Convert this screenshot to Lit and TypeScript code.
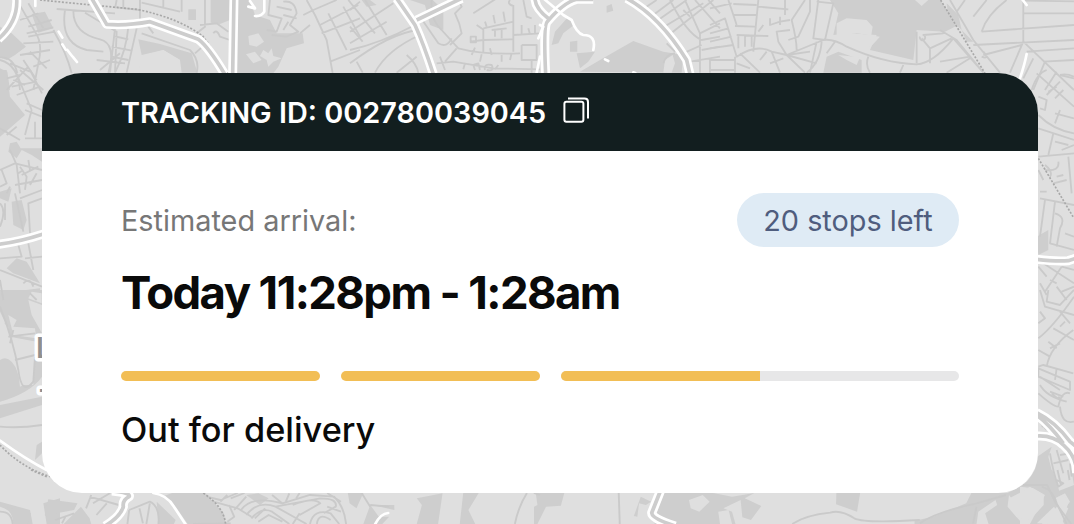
import { LitElement, html, css, svg } from 'lit';
import { customElement, property } from 'lit/decorators.js';

interface MapTile {
    transform: string;
    areas?: string;
    land?: string;
    streets?: string;
    roads?: string;
    paths?: string;
    rails?: string;
}

// Each tile keeps its own local grid, the transform puts it on the map
const TILES: MapTile[] = [
    {
        transform: 'scale(.3333)',
        areas: `M0 80L35 100 78 140 45 165 20 180 0 172Z M0 205L22 215 30 270H0Z M95 42L135 35 160 85 115 98Z
            M415 118L480 132 575 160 592 218H540V180L490 150 425 165Z M565 28H588V60H565Z M632 0H690V60L660 72 632 68Z
            M708 0H750L765 45 810 60 830 100 908 100 912 130 860 145 835 200 820 220H708Z M560 165L575 165 590 218H560Z`,
        land: `M745 108L775 100 792 125 770 140 748 135Z M738 163L765 155 785 180 760 190Z M790 150L805 160 815 145 820 168 845 175 820 185 805 200 800 180 780 168Z
            M425 168L490 150 540 180 545 218H417Z`,
        streets: `M0 172Q40 170 52 219 M0 180Q55 195 60 270 M60 60L115 40 M62 20L105 95Q130 130 115 190L100 270 M85 10L130 85
            M160 90Q200 160 215 220 M195 30Q180 130 260 150L310 155 M220 33Q220 100 300 118 350 130 325 219 M255 38L350 95 345 218
            M170 27L345 40 M345 85L330 218 M385 80Q380 150 345 218 M410 85L380 218 M425 100L570 150Q600 180 590 218 M445 80L460 100
            M340 108L385 118 M335 140L395 152 M335 170L385 180 M290 180L375 190 M300 210L360 160 M70 130L160 125 M60 165L150 150
            M30 190L90 215 M60 210L130 270 M90 155L140 205 M70 180L110 240 M20 270L85 200 M40 240L75 255 M100 200L150 180
            M85 80L155 60 M80 100L160 82 M85 110L165 95 M350 0L345 25 M370 0V25 M420 0V60 M350 22L420 30 M425 8L540 35 M490 0V22 M545 0V35
            M615 0V80L590 100 M600 75L650 70 685 95 M640 100Q650 85 660 110L690 120 M585 160L625 125
            M810 0L805 45 845 55 830 95 800 90 M850 5Q885 0 890 40L870 75 895 95 860 110 815 105 M830 20L875 30 M850 45L890 55 M865 65L850 90
            M910 45L940 30 1010 0 M945 45L980 120 998 219 M960 75L1075 15 M965 100L1080 55 M985 40L1040 150 M1030 20L1080 110 M990 185L1080 150
            M900 100L930 75 M920 0L945 45`,
        roads: 'M50 -5Q55 65 -5 117 M275 -5L320 73Q380 78 450 65L595 118Q625 140 674 222 M702 -5L698 225',
        paths: 'M106 0V18 M745 20L765 25 750 3 M793 0V35Q785 50 765 48 M176 95L187 113 M187 133L197 149 M202 150L216 168 M218 170L231 186',
        rails: 'M120 0L410 28Q540 55 610 110L685 222'
    },
    {
        transform: 'translate(350 0) scale(.3333)',
        areas: `M180 0H248L280 30V90L240 75 225 15Z M605 135L615 95 655 50 672 75 640 100 625 130Z M660 125L682 122V155H660Z M680 160L735 155 715 185 690 205Z
            M690 215L750 180 850 123 940 155 1000 165 995 218Z M770 18L785 12 790 32 770 38Z M35 0L60 0 80 15 50 20Z`,
        land: 'M940 218L945 180 968 165 975 190 965 218Z',
        streets: `M0 80L38 125 M0 150Q90 130 195 75 M0 190Q120 100 205 90 M75 218Q110 150 210 105 M140 218L200 170 M20 185L38 218 M0 95L130 10 M-5 0L75 100
            M45 0L110 105 M0 30L30 5 M0 130L110 65 M170 165Q200 190 205 219 M210 50Q245 100 265 130 290 145 305 115 M245 0Q240 60 275 90L325 145Q400 165 510 160
            M400 125V155 M400 85L490 65 M400 120L490 118 M400 85V155 M490 15V155 M490 105L570 100 M480 0Q470 12 490 18 M515 135H560V180H515V135 M370 40L440 -5
            M410 80L405 65 M435 70L430 45 M465 65L460 35 M380 75L402 90 M360 125L400 120 M362 110H378V127H362Z M425 90L470 85 M435 90V110 M455 87V115
            M365 165L375 143 M395 163L390 185 M425 165L420 145 M455 165V185 M485 160L480 180 M515 105V75 M540 103L535 85 M555 100V75
            M320 145L285 185 M260 190L310 185 430 205 570 208 M340 208L345 190 M375 210L370 195 385 190 390 210 M405 210Q400 190 425 195 435 215 410 210 M435 208L445 195
            M545 180V218 M270 170L285 210 M325 0L335 20 315 40Q330 70 335 100L300 135 M520 0L530 50 545 55 M875 30L920 0 M910 45L970 0 M925 60L1010 0
            M935 85L1060 10 M950 110L1090 0 M960 0Q1010 100 1055 120L1110 110 M1005 0L1050 100 1050 218 M1035 0L1110 85 M1075 0L1110 40 M1050 100L1110 70 M1055 150L1110 140
            M1020 185L1110 170 M950 130L975 155 M1000 160L1055 135 M1000 30L1020 50 M940 190Q950 160 975 160 M1080 175V218`,
        roads: 'M140 -5L195 75Q220 130 250 222 M200 60L335 -5 M555 -5Q555 25 597 57 M730 -2H680Q640 8 592 65 580 75 587 222 M830 -5Q930 50 1010 180L1020 222',
        paths: 'M580 -5L640 45 665 60Q680 100 700 105 740 105 730 150 M765 178L775 183 M570 75L580 80 565 115 M570 170L560 218 M850 217L856 219'
    },
    {
        transform: 'translate(710 0) scale(.3333)',
        areas: `M360 0H690L745 75 705 95 620 90 610 180 480 150 500 105 420 100 370 105 385 40Z M350 170L385 155 455 180 455 218H340Z
            M710 10L745 45 755 90 715 50Z M755 90L790 125 770 125Z`,
        land: `M380 70L410 55 470 60 488 80 478 145 510 110 440 100 380 108Z M615 0H655L635 18Z M385 165L450 172 440 195 410 180Z`,
        streets: `M55 0L80 75 M0 25L65 10 M70 12L140 15 M70 45H140 M75 78L135 80 M145 0L130 155 M145 20L235 28 M0 75L45 55 80 170Q140 130 185 155L230 165
            M0 100L55 85 M0 125L65 110 M0 145L70 135 M0 180H75 M0 210H75 M75 170V218 M80 105L175 108 M85 105V145 M105 108V140 M125 108V140 M145 95L160 75
            M180 55V75L210 65 240 60 M210 50V75 M225 0V45 M285 0L245 60Q260 120 260 150 M300 0V35L265 110 235 120 M325 0L310 115 345 120 370 10 320 5
            M230 165L340 120Q370 115 410 140 520 190 620 193 670 190 730 115L820 218 M230 165L285 218 M230 165L205 125 200 95 240 90 M230 165L300 155
            M230 165L320 190 M335 125Q330 190 290 218 M320 125L300 218 M150 180L170 155 M185 155L210 218 M90 160L150 218 M80 190L120 205 M180 190L220 175
            M350 160L375 125 M475 170Q465 195 480 218 M580 195L570 218 M620 190V95 M630 110A8 8 0 1 0 640 105L700 100 M635 115L660 145V190 M660 145L725 115
            M690 185L780 170 M710 218L780 175 M690 90L740 120 820 218 M720 0L790 120 870 218 M740 35L765 0 M790 50L830 0 M815 95Q830 45 890 0
            M940 -10V125L1092 270 M940 40H1092 M815 95L1092 75 M790 135L1092 120 M950 155L1092 145 M1000 185L1092 180 M940 125L900 218 M820 165L935 135
            M820 155Q840 180 815 170 M970 175L940 235 M1005 185L970 270 M1040 215L1005 270 M1050 225Q1070 220 1092 230 M945 2L1092 4`,
        paths: 'M938 0L950 15 M950 162Q945 190 930 235',
        rails: 'M692 0L825 220'
    },
    {
        transform: 'translate(0 70) scale(.3333)',
        areas: `M0 0H20L30 80 75 135 0 200Z M30 220L50 215 65 240 50 265 25 245Z M55 235H126V275L95 255Z M0 365L35 355 25 395 0 385Z M35 395L65 390 80 450 70 480 40 465Z
            M20 595L50 565 80 575 120 640 40 610Z M0 670L120 655V690H0Z`,
        streets: `M20 25L60 15 M35 50L110 35 M50 75L120 50 M45 0L95 120 M90 0L126 70 M75 120L126 140 M95 120L75 195 M0 175L60 210 M20 195L50 170 M75 205H126
            M105 155V205 M126 120L80 100 M0 300L45 280 126 300 M30 240L50 285 60 370 M45 345L126 330 M5 300L20 340 0 350 M60 290L80 320 75 360
            M65 315L115 290 M90 345L110 310 M30 350L20 370 M45 370L70 485 M60 385L126 360 M90 490L85 400 126 385 M0 400Q20 420 0 470 M15 400V450
            M55 310L70 300 M85 270L90 300 M55 525L65 560 0 565 M85 520L100 600 M0 600L126 650 M75 565L126 560 M70 640Q90 620 100 650 M0 630L10 690 M90 670L110 690`,
        roads: 'M-5 523Q60 515 130 492'
    },
    {
        transform: 'translate(0 290) scale(.3333)',
        areas: `M0 0H126V45L85 30 95 75 115 110 126 130V345L0 385V210Q30 190 55 250L60 290 100 270 110 155 30 140 25 110 0 90Z M110 465L126 455V490L105 510Z
            M0 635L90 660 98 702H0Z M130 640L180 625V702H140Z`,
        land: `M0 65L15 95 10 120 0 115Z M25 75L50 90 40 110 105 115 108 145 40 135Z M35 150L105 155 100 285 65 285 50 240Z M95 5L125 10V40L85 25Z
            M0 335Q90 310 126 260V320L0 345Z M0 650Q40 660 40 702H0Z`,
        streets: 'M0 50Q40 150 55 240 65 320 100 275L105 200 M0 410Q60 415 126 405 M25 140L105 130 M45 210L105 195 M30 160L40 120 M0 665Q35 665 38 702',
        paths: 'M0 452Q80 510 140 540',
        rails: 'M0 465Q60 530 150 560'
    },
    {
        transform: 'translate(1020 70) scale(.3333)',
        areas: 'M50 500L85 480V540L55 555Z',
        streets: `M80 0Q50 10 35 60 M50 10L162 110 M120 15L162 25 M85 65L110 50 M80 75L120 35 M105 85L130 60 M55 80L80 90 75 120 60 115 M55 135Q100 180 162 190
            M105 130L162 145 M105 160L120 120 M55 175L162 210 M100 190L85 255 M55 260L162 250 M105 215L145 225 M125 240L162 225 M75 285Q100 305 90 320
            M115 275Q120 305 75 300 M145 260L155 370 M110 320L130 315 M100 340L140 330 M55 300L70 330 M60 365H80 M60 385L162 405 M75 390L60 500
            M105 395L90 520 162 540 M105 430Q140 440 120 475L110 530 M135 490L162 500 M55 590L80 620 M70 580L162 640 M75 665L125 590 M125 590L162 600
            M110 650L140 690 M125 665L162 650 M60 640L80 675 M90 630L110 640`,
        roads: 'M50 568Q110 575 145 572L170 564',
        rails: 'M55 265L162 445'
    },
    {
        transform: 'translate(1020 290) scale(.3333)',
        areas: 'M52 500L95 470 85 500 110 600 162 595V702H0V590Q50 560 52 500Z',
        land: 'M0 590L40 595 75 615 30 702H0Z M65 702L120 640 145 655 125 702Z M105 625L135 610 150 635 135 655Z',
        streets: `M60 0L75 50 162 75 M85 0L80 35 120 45 162 0 M60 65L75 85 55 100 M55 145Q100 110 162 20 M55 180L90 200 M80 230Q90 170 160 120 M100 115L162 150
            M85 155L110 175 M90 175L120 160 M120 110L135 95 M120 65L150 100 M55 230L70 225 160 250 M55 235L150 275V300L55 260Z M110 235L105 270
            M60 260L120 300 M60 285Q80 320 140 335 M55 310Q100 350 115 350 125 300 150 310 M90 305L130 320 M115 320Q130 340 95 310 M120 350Q125 405 162 395
            M90 490Q100 550 115 590L130 580 110 570 M110 480L130 550 M120 495L150 490 M100 520L145 510 M150 520L155 560 M65 590Q100 600 110 640L140 702
            M55 390L80 420 M65 410L90 400`,
        roads: 'M50 368Q105 395 150 455L175 475 M50 438Q100 435 130 465 170 500 170 550 M50 375Q90 405 130 460'
    },
    {
        transform: 'translate(0 470) scale(.3444 .3333)',
        areas: `M140 88L225 100 215 120 165 130 145 150 130 135Z M235 110L260 145 265 162H185Z M500 69H595L650 130 655 162H545L510 110 470 80Z M0 105L90 130 80 162H40L25 130 0 115Z
            M715 75L750 70 780 85 755 105Z M1010 69H1055L1035 115 1015 100Z M1075 105L1100 140 1130 140 1110 162H1055Z M1210 85L1285 70 1272 162H1210L1225 105Z
            M1345 69H1390L1360 120 1380 162H1335Z M455 95L510 150 505 162H460Z M1080 105H1145V120Z`,
        streets: `M265 75L250 115 M260 80L345 105 M310 100L280 135 M320 69L270 100 M160 150L215 130 M180 160L190 140 M375 120L435 95Q465 110 460 162 M375 120L370 162
            M405 115L415 160 M435 100L425 162 M600 80L640 90 690 69 M620 95L690 115 730 140 M640 95L660 75 M670 85L710 69 M665 105L680 140 660 155 M680 120L715 80
            M700 120Q730 75 820 100L790 75 M715 135Q750 90 800 110L890 162 M730 145Q760 110 790 125L840 162 M750 155L780 135 820 155 M770 115L740 145
            M820 100L900 75 970 80Q1000 110 1005 162 M800 110L930 85Q980 85 975 110L940 130 M850 105Q910 80 930 100L870 135 M870 130L850 162
            M900 162Q910 115 960 130L985 162 M920 162Q925 125 960 150 M950 110L990 125 M840 70L830 95 M870 69L860 85 M950 69L990 95 M560 162L670 160
            M1050 69L1075 110 M1075 105L1130 110 M1495 162Q1505 110 1530 69 M1550 69L1568 75`,
        roads: 'M325 63Q380 68 375 80 355 90 358 110 350 140 305 168',
        paths: 'M445 69Q485 75 505 110L540 165 M1088 165Q1105 130 1127 129',
        rails: 'M90 0L140 22 M590 69Q650 110 655 162'
    },
    {
        transform: 'translate(534 470) scale(.3444 .3333)',
        areas: `M5 69H88L78 107 35 110 10 162H0V110L10 105Z M378 69H520L575 80 640 69 612 85 660 108 630 150 605 142 600 90 550 115 575 125 585 162H350L355 130Z
            M878 69H947L938 125 877 103Z M1270 69H1380L1375 110 1400 140 1420 162H1105V152L1160 140 1255 100Z M1430 40L1455 0H1568V162H1540L1500 110 1440 162 1375 69Z M310 80L340 95 325 105 305 100 300 140 290 138Z`,
        land: `M450 90L490 75 510 95 480 125 455 115Z M535 125L565 120 575 162H540Z M1380 85L1410 69 1440 50 1480 75 1480 105 1440 150 1400 140Z
            M1290 125L1340 90 1345 105 1310 130 1320 162H1285Z M1515 90L1540 75 1553 95 1545 118 1520 105Z M1460 160L1510 110 1540 162Z M1505 0H1560L1568 45 1525 62 1515 30Z`,
        streets: `M246 69L249 162 M750 162Q790 135 860 128 890 118 930 145 960 160 1120 150 M1120 160Q1170 125 1285 100L1370 75 M1420 45H1490L1515 100 1560 162 M1520 0L1530 45 M1285 110L1275 160 M1550 0L1555 30`,
        roads: 'M367 63L342 128Q340 145 410 168'
    }
];

@customElement('map-backdrop')
export class MapBackdrop extends LitElement {
    static styles = css`
        :host {
            display: block;
            background: #dfdfdf;
        }

        svg {
            display: block;
            width: 100%;
            height: 100%;
        }

        path {
            fill: none;
            stroke-linejoin: round;
        }

        .area {
            fill: #cecece;
        }

        .land {
            fill: #dfdfdf;
        }

        .street {
            stroke: #cacaca;
            stroke-width: 5.5;
        }

        .casing {
            stroke: #fff;
            stroke-width: 27;
        }

        .road {
            stroke: #cdcdcd;
            stroke-width: 11;
        }

        .path {
            stroke: #fff;
            stroke-width: 8;
            stroke-linecap: round;
        }

        .rail {
            stroke: #a8a8a8;
            stroke-width: 5;
            stroke-dasharray: 6 5;
        }

        text {
            font: 600 29px Inter, sans-serif;
            fill: #8f8f8f;
            stroke: #fff;
            stroke-width: 7;
            stroke-linejoin: round;
            paint-order: stroke;
        }
    `;

    render() {
        return html`
            <svg viewBox="0 0 1074 524" aria-hidden="true">
                ${this._layer('areas', 'area')}
                ${this._layer('land', 'land')}
                ${this._layer('streets', 'street')}
                ${this._layer('rails', 'rail')}
                ${this._layer('roads', 'casing')}
                ${this._layer('roads', 'road')}
                ${this._layer('paths', 'path')}
                <text x="36" y="358">L</text>
                <text x="38" y="399">-</text>
            </svg>
        `;
    }

    private _layer(key: keyof MapTile, className: string) {
        return TILES.filter((tile) => tile[key]).map(
            (tile) => svg`<path class=${className} transform=${tile.transform} d=${tile[key]}></path>`
        );
    }
}

@customElement('delivery-progress')
export class DeliveryProgress extends LitElement {
    @property({ attribute: false }) steps: { size: number; value: number }[] = [];

    static styles = css`
        :host {
            display: flex;
            gap: 21px;
        }

        .step {
            height: 10px;
            border-radius: 5px;
            background: #e7e7e8;
            overflow: hidden;
        }

        .fill {
            height: 100%;
            background: #f2be55;
        }
    `;

    render() {
        return this.steps.map((step) => html`
            <div class="step" style="flex: ${step.size} 1 0">
                <div class="fill" style="width: ${step.value}%"></div>
            </div>
        `);
    }
}

@customElement('app-root')
export class AppRoot extends LitElement {
    static styles = css`
        :host {
            display: grid;
            width: 1074px;
            height: 524px;
            overflow: hidden;
            font-family: Inter, sans-serif;
        }

        map-backdrop,
        .card {
            grid-area: 1 / 1;
        }

        .card {
            z-index: 1;
            box-sizing: border-box;
            margin: 73px 36px 31px 42px;
            border-radius: 40px;
            background: #fff;
            overflow: hidden;
        }

        .header {
            display: flex;
            align-items: center;
            gap: 16px;
            height: 78px;
            padding: 0 79px;
            background: #121e1f;
            color: #fff;
            font-size: 28.85px;
            font-weight: 600;
            white-space: nowrap;
        }

        .copy {
            width: 28px;
            height: 28px;
            margin-top: -4px;
            fill: none;
            stroke: #fff;
            stroke-width: 2;
        }

        .body {
            padding: 42px 79px 0;
        }

        .row {
            display: flex;
            align-items: center;
            justify-content: space-between;
            height: 54px;
            font-size: 28.85px;
        }

        .label {
            padding-top: 1px;
            color: #777;
        }

        .badge {
            box-sizing: border-box;
            width: 222px;
            height: 54px;
            padding-top: 1px;
            border-radius: 27px;
            background: #dfebf5;
            color: #4f5d7e;
            line-height: 54px;
            text-align: center;
        }

        .window {
            margin-top: 16px;
            font-size: 45.5px;
            font-weight: 700;
            line-height: 60px;
            letter-spacing: -1.6px;
            color: #0a0a0a;
            white-space: nowrap;
        }

        delivery-progress {
            margin-top: 48px;
        }

        .status {
            margin-top: 28px;
            font-size: 34.3px;
            font-weight: 450;
            line-height: 42px;
            color: #0a0a0a;
        }
    `;

    private _steps = [
        { size: 1, value: 100 },
        { size: 1, value: 100 },
        { size: 2, value: 50 }
    ];

    render() {
        return html`
            <map-backdrop></map-backdrop>
            <div class="card">
                <div class="header">
                    <span>TRACKING ID: 002780039045</span>
                    <svg class="copy" viewBox="0 0 28 28">
                        <rect x="2.4" y="5.7" width="19" height="20" rx="2"></rect>
                        <path d="M6 2.6H22.5Q26 2.6 26 6V22.5"></path>
                    </svg>
                </div>
                <div class="body">
                    <div class="row">
                        <span class="label">Estimated arrival:</span>
                        <span class="badge">20 stops left</span>
                    </div>
                    <div class="window">Today 11:28pm - 1:28am</div>
                    <delivery-progress .steps=${this._steps}></delivery-progress>
                    <div class="status">Out for delivery</div>
                </div>
            </div>
        `;
    }
}
